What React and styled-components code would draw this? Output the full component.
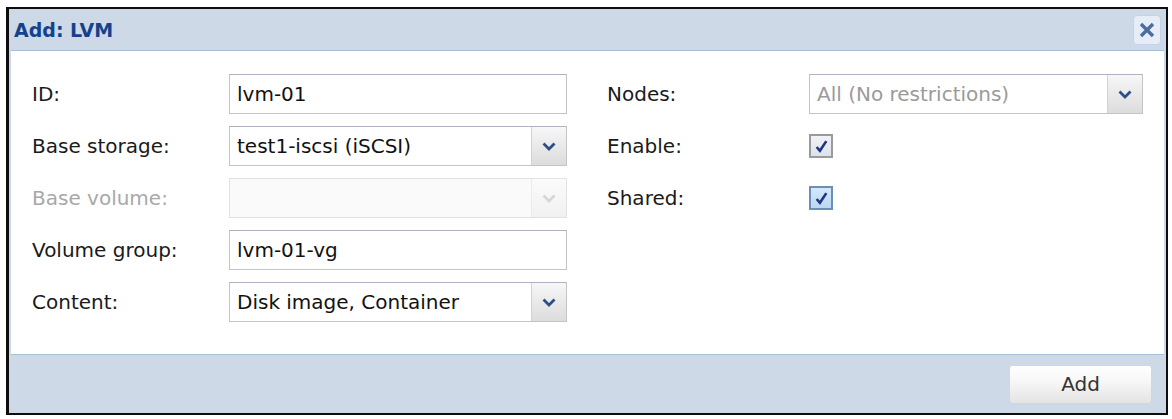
import React from 'react';
import styled, { createGlobalStyle } from 'styled-components';

const GlobalStyle = createGlobalStyle`
  html, body {
    margin: 0;
    padding: 0;
    background: #fff;
  }
  body {
    font-family: "DejaVu Sans", Verdana, sans-serif;
  }
`;

const Page = styled.div`
  padding: 7px 4px 4px 6px;
`;

const StyledWindow = styled.div`
  box-sizing: border-box;
  width: 1162px;
  height: 408px;
  border: 2px solid #0d0d0d;
  border-left-width: 3px;
  background: #cdd9e7;
  display: flex;
  flex-direction: column;
`;

const StyledHeader = styled.div`
  height: 41px;
  flex: none;
  display: flex;
  align-items: center;
  justify-content: space-between;
  padding: 0 5px 0 5px;
  .title {
    font-size: 19px;
    font-weight: bold;
    color: #15428b;
  }
`;

const StyledClose = styled.div`
  width: 26px;
  height: 28px;
  border-radius: 4px;
  background: #e6edf6;
  border: 1px solid #c4d4e8;
  display: flex;
  align-items: center;
  justify-content: center;
`;

const StyledBody = styled.div`
  flex: 1;
  margin: 0 2px;
  background: #fff;
  border-top: 1px solid #a9bfd9;
  border-bottom: 1px solid #a9bfd9;
  padding: 23px 0 0 21px;
  display: flex;
`;

const StyledColumn = styled.div`
  width: ${props => props.width}px;
  display: flex;
  flex-direction: column;
`;

const StyledRow = styled.div`
  display: flex;
  align-items: center;
  height: 40px;
  margin-bottom: 12px;
`;

const StyledLabel = styled.div`
  width: ${props => props.width}px;
  flex: none;
  font-size: 20px;
  color: ${props => (props.disabled ? '#a8a8a8' : '#1a1a1a')};
`;

const StyledField = styled.div`
  box-sizing: border-box;
  width: ${props => props.width}px;
  height: 40px;
  display: flex;
  align-items: stretch;
  border: 1px solid ${props => (props.disabled ? '#e2e2e2' : '#c2c4cc')};
  border-top-color: ${props => (props.disabled ? '#e2e2e2' : '#b0b3bd')};
  background: ${props => (props.disabled ? '#fafafa' : '#fff')};
  .value {
    flex: 1;
    display: flex;
    align-items: center;
    padding: 0 7px;
    font-size: 20px;
    color: ${props => (props.muted ? '#9a9a9a' : '#111')};
    white-space: nowrap;
    overflow: hidden;
  }
`;

const StyledTrigger = styled.div`
  width: 34px;
  flex: none;
  display: flex;
  align-items: center;
  justify-content: center;
  border-left: 1px solid ${props => (props.disabled ? '#ececec' : '#d2d2d2')};
  background: ${props => (props.disabled
    ? 'linear-gradient(#fbfbfb, #f1f1f1)'
    : 'linear-gradient(#f7f7f7, #dcdcdc)')};
`;

const StyledCheck = styled.div`
  box-sizing: border-box;
  width: 24px;
  height: 24px;
  border: 2px solid ${props => (props.blue ? '#6c8fb6' : '#9a9a9a')};
  background: ${props => (props.blue ? 'linear-gradient(#d4e8fb, #b9d7f5)' : 'linear-gradient(#f0f2f6, #dde2ea)')};
  display: flex;
  align-items: center;
  justify-content: center;
`;

const StyledFooter = styled.div`
  height: 58px;
  flex: none;
  display: flex;
  align-items: center;
  justify-content: flex-end;
  padding-right: 14px;
`;

const StyledButton = styled.div`
  box-sizing: border-box;
  width: 143px;
  height: 39px;
  border: 1px solid #d3d6da;
  border-radius: 3px;
  background: linear-gradient(#ffffff 0%, #f6f6f6 45%, #e4e4e4 100%);
  display: flex;
  align-items: center;
  justify-content: center;
  font-size: 20px;
  color: #333;
`;

const Chevron = ({ disabled }) => (
  <svg width="14" height="9" viewBox="0 0 14 9">
    <path
      d="M1.5 1.5 L7 7 L12.5 1.5"
      fill="none"
      stroke={disabled ? '#d6d6d6' : '#2c4f86'}
      strokeWidth="2.8"
    />
  </svg>
);

const Tick = () => (
  <svg width="15" height="15" viewBox="0 0 14 14">
    <path d="M2.5 7.5 L5.5 11 L11.5 2" fill="none" stroke="#1f3585" strokeWidth="2.4" />
  </svg>
);

function TextField({ value }) {
  return (
    <StyledField width={338}>
      <div className="value">{value}</div>
    </StyledField>
  );
}

function Combo({ value, width = 338, disabled, muted }) {
  return (
    <StyledField width={width} disabled={disabled} muted={muted}>
      <div className="value">{value}</div>
      <StyledTrigger disabled={disabled}>
        <Chevron disabled={disabled} />
      </StyledTrigger>
    </StyledField>
  );
}

export default function App() {
  return (
    <Page>
      <GlobalStyle />
      <StyledWindow>
        <StyledHeader>
          <span className="title">Add: LVM</span>
          <StyledClose>
            <svg width="18" height="18" viewBox="0 0 18 18">
              <path d="M3 3 L15 15 M15 3 L3 15" stroke="#4a6e9f" strokeWidth="3.4" />
            </svg>
          </StyledClose>
        </StyledHeader>
        <StyledBody>
          <StyledColumn width={575}>
            <StyledRow>
              <StyledLabel width={197}>ID:</StyledLabel>
              <TextField value="lvm-01" />
            </StyledRow>
            <StyledRow>
              <StyledLabel width={197}>Base storage:</StyledLabel>
              <Combo value="test1-iscsi (iSCSI)" />
            </StyledRow>
            <StyledRow>
              <StyledLabel width={197} disabled>Base volume:</StyledLabel>
              <Combo value="" disabled />
            </StyledRow>
            <StyledRow>
              <StyledLabel width={197}>Volume group:</StyledLabel>
              <TextField value="lvm-01-vg" />
            </StyledRow>
            <StyledRow>
              <StyledLabel width={197}>Content:</StyledLabel>
              <Combo value="Disk image, Container" />
            </StyledRow>
          </StyledColumn>
          <StyledColumn width={540}>
            <StyledRow>
              <StyledLabel width={202}>Nodes:</StyledLabel>
              <Combo value="All (No restrictions)" width={334} muted />
            </StyledRow>
            <StyledRow>
              <StyledLabel width={202}>Enable:</StyledLabel>
              <StyledCheck>
                <Tick />
              </StyledCheck>
            </StyledRow>
            <StyledRow>
              <StyledLabel width={202}>Shared:</StyledLabel>
              <StyledCheck blue>
                <Tick />
              </StyledCheck>
            </StyledRow>
          </StyledColumn>
        </StyledBody>
        <StyledFooter>
          <StyledButton>Add</StyledButton>
        </StyledFooter>
      </StyledWindow>
    </Page>
  );
}
